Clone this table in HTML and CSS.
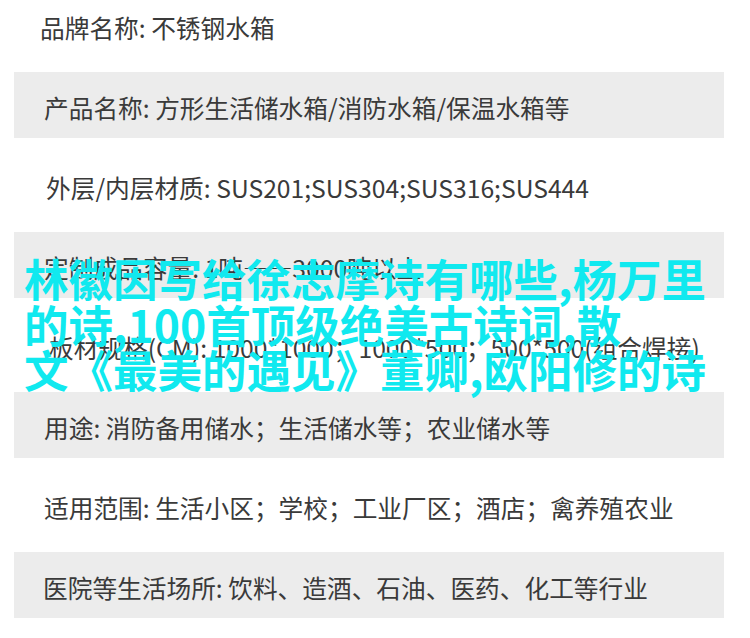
FILE: index.html
```html
<!DOCTYPE html>
<html lang="zh-CN">
<head>
<meta charset="utf-8">
<title>不锈钢水箱</title>
<link rel="stylesheet" href="styles.css">
</head>
<body>
<div class="page">
  <ul class="specs">
    <li class="row row-white row-first"><span class="t t-1">品牌名称: 不锈钢水箱</span></li>
    <li class="row row-grey"><span class="t">产品名称: 方形生活储水箱/消防水箱/保温水箱等</span></li>
    <li class="row row-white"><span class="t t-3">外层/内层材质: SUS201;SUS304;SUS316;SUS444</span></li>
    <li class="row row-grey"><span class="t">定制成品容量: 1吨——3000吨以上</span></li>
    <li class="row row-white"><span class="t t-5">板材规格(CM): 1000*1000；1000*500；500*500(组合焊接)</span></li>
    <li class="row row-grey"><span class="t">用途: 消防备用储水；生活储水等；农业储水等</span></li>
    <li class="row row-white"><span class="t">适用范围: 生活小区；学校；工业厂区；酒店；禽养殖农业</span></li>
    <li class="row row-grey"><span class="t t-8">医院等生活场所: 饮料、造酒、石油、医药、化工等行业</span></li>
    <li class="row row-white"></li>
  </ul>
  <h1 class="title">林徽因写给徐志摩诗有哪些,杨万里<br>的诗,100首顶级绝美古诗词,散<br>文《最美的遇见》董卿,欧阳修的诗</h1>
</div>
</body>
</html>
```
FILE: styles.css
```css
html, body {
  margin: 0;
  padding: 0;
  background: #ffffff;
}
body {
  width: 750px;
  height: 638px;
  overflow: hidden;
  font-family: "Noto Sans CJK SC", "Noto Sans", sans-serif;
}
.page {
  position: relative;
  width: 750px;
  height: 638px;
  overflow: hidden;
}
.specs {
  list-style: none;
  margin: -22px 0 0 0;
  padding: 0 26px 0 14px;
  display: flex;
  flex-direction: column;
}
.row {
  display: flex;
  align-items: center;
  padding-left: 30px;
  font-size: 24.7px;
  color: #3a3a3a;
  white-space: nowrap;
}
.row-white {
  height: 94px;
  background: #ffffff;
}
.row-grey {
  height: 66px;
  background: #ececec;
}
.t {
  position: relative;
  top: 2px;
}
.t-1 { margin-left: -4px; }
.t-3 { margin-left: 2px; }
.t-5 { margin-left: 5px; }
.t-8 { margin-left: -1px; }
.title {
  position: absolute;
  left: 24px;
  top: 255px;
  margin: 0;
  font-size: 44.5px;
  line-height: 45.5px;
  font-weight: 700;
  color: #10e9ef;
  white-space: nowrap;
  letter-spacing: 0;
}
```
